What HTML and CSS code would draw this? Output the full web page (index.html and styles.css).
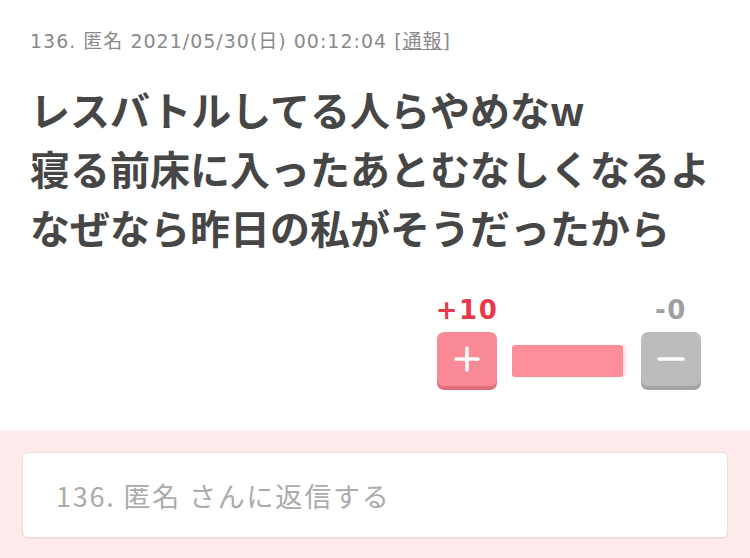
FILE: index.html
```html
<!DOCTYPE html>
<html lang="ja">
<head>
<meta charset="utf-8">
<link rel="stylesheet" href="styles.css">
</head>
<body>
<div class="post">
  <div class="meta">136. 匿名 2021/05/30(日) 00:12:04 [<span class="report">通報</span>]</div>
  <div class="body">レスバトルしてる人らやめなw<br>寝る前床に入ったあとむなしくなるよ<br>なぜなら昨日の私がそうだったから</div>
  <div class="votes">
    <div class="vote-col">
      <div class="count plus-count">+10</div>
      <div class="btn btn-plus">
        <svg width="28" height="28" viewBox="0 0 28 28"><path d="M14 3v22M3 14h22" stroke="#fff" stroke-width="3.5" stroke-linecap="round"/></svg>
      </div>
    </div>
    <div class="bar-wrap"><div class="bar"></div></div>
    <div class="vote-col">
      <div class="count minus-count">-0</div>
      <div class="btn btn-minus">
        <svg width="30" height="28" viewBox="0 0 30 28"><path d="M3 14h24" stroke="#fff" stroke-width="3.5" stroke-linecap="round"/></svg>
      </div>
    </div>
  </div>
</div>
<div class="reply-area">
  <div class="reply-box">136. 匿名 さんに返信する</div>
</div>
</body>
</html>
```
FILE: styles.css
```css
html, body {
  margin: 0;
  padding: 0;
  background: #fff;
}
body {
  width: 750px;
  height: 558px;
  overflow: hidden;
  font-family: "Noto Sans CJK JP", "Noto Sans", sans-serif;
}
.post {
  padding: 26px 30px 0 30px;
  height: 405px;
  box-sizing: border-box;
}
.meta {
  font-family: "DejaVu Sans", "Noto Sans CJK JP", sans-serif;
  font-size: 19px;
  line-height: 30px;
  color: #8a8a8a;
  letter-spacing: 1px;
}
.report {
  text-decoration: underline;
}
.body {
  margin-top: 24px;
  font-size: 40px;
  font-weight: bold;
  line-height: 59px;
  color: #464646;
}
.votes {
  display: flex;
  justify-content: flex-end;
  align-items: flex-end;
  margin-top: 38px;
  padding-right: 19px;
}
.vote-col {
  display: flex;
  flex-direction: column;
  align-items: center;
  width: 60px;
}
.count {
  font-family: "DejaVu Sans", sans-serif;
  font-weight: bold;
  font-size: 26px;
  letter-spacing: 1.5px;
  line-height: 30px;
  margin-bottom: 7px;
}
.plus-count { color: #e8394c; }
.minus-count { color: #a0a0a0; }
.btn {
  width: 60px;
  height: 54px;
  border-radius: 7px;
  display: flex;
  align-items: center;
  justify-content: center;
}
.btn-plus {
  background: #fb8a97;
  box-shadow: 0 4px 0 #e06e7c;
}
.btn-minus {
  background: #bcbcbc;
  box-shadow: 0 4px 0 #a3a3a3;
}
.bar-wrap {
  width: 115px;
  margin: 0 14px 9px 15px;
  height: 32px;
}
.bar {
  width: 111px;
  height: 32px;
  background: #fc8e9a;
  border-radius: 3px;
  box-shadow: 3px 0 2px rgba(252, 142, 154, 0.25);
}
.reply-area {
  margin-top: 26px;
  background: #fdeaea;
  padding: 21px 22px;
  height: 127px;
  box-sizing: border-box;
}
.reply-box {
  background: #fff;
  height: 86px;
  border: 1px solid #efdcdc;
  border-radius: 6px;
  box-sizing: border-box;
  padding-left: 33px;
  display: flex;
  align-items: center;
  font-size: 27px;
  color: #ababab;
  letter-spacing: 1.8px;
  box-shadow: 0 1px 2px rgba(0,0,0,0.06);
}
```
